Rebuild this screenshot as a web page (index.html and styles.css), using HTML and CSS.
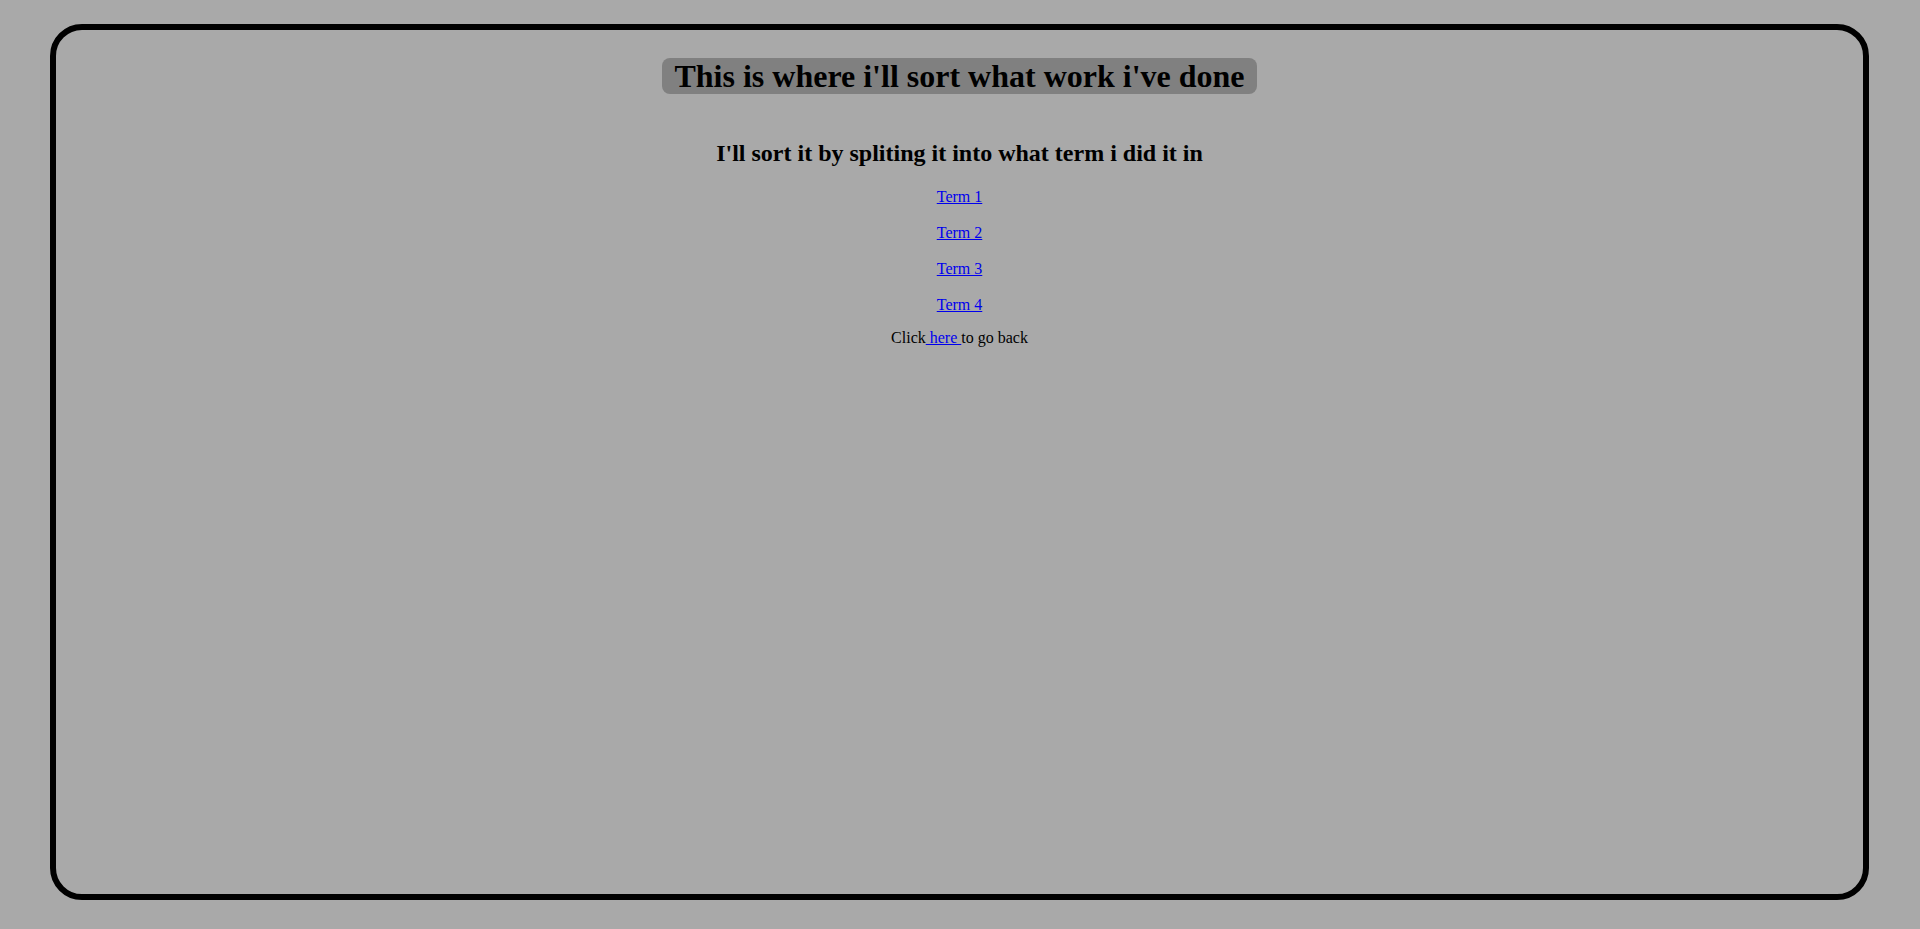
FILE: index.html
```html
<!DOCTYPE html>
<html>
<head>
<meta charset="utf-8">
<link rel="stylesheet" href="styles.css">
</head>
<body>
<div class="frame">
  <h1 class="title"><span class="title-text">This is where i'll sort what work i've done</span></h1>
  <h2 class="subtitle">I'll sort it by spliting it into what term i did it in</h2>
  <p class="term"><a href="#">Term 1</a></p>
  <p class="term"><a href="#">Term 2</a></p>
  <p class="term"><a href="#">Term 3</a></p>
  <p class="term"><a href="#">Term 4</a></p>
  <p class="back">Click<a href="#"> here </a>to go back</p>
</div>
</body>
</html>
```
FILE: styles.css
```css
html, body {
  margin: 0;
  padding: 0;
  background: #a9a9a9;
  font-family: "Liberation Serif", "Times New Roman", serif;
  color: #000;
}
body {
  padding: 24px 51px 29px 50px;
}
.frame {
  box-sizing: border-box;
  height: 876px;
  border: 6px solid #000;
  border-radius: 32px;
  text-align: center;
  padding-top: 1px;
}
.title {
  font-size: 32px;
  margin: 27px 0 0;
}
.title-text {
  background: #808080;
  border-radius: 8px;
  padding: 0 12px;
}
.subtitle {
  font-size: 24px;
  margin: 45px 0 20px;
}
.term {
  font-size: 16px;
  margin: 16px 0 0;
  line-height: 20px;
}
.back {
  font-size: 16px;
  margin: 14px 0 0;
}
a {
  color: #0000ee;
}
```
